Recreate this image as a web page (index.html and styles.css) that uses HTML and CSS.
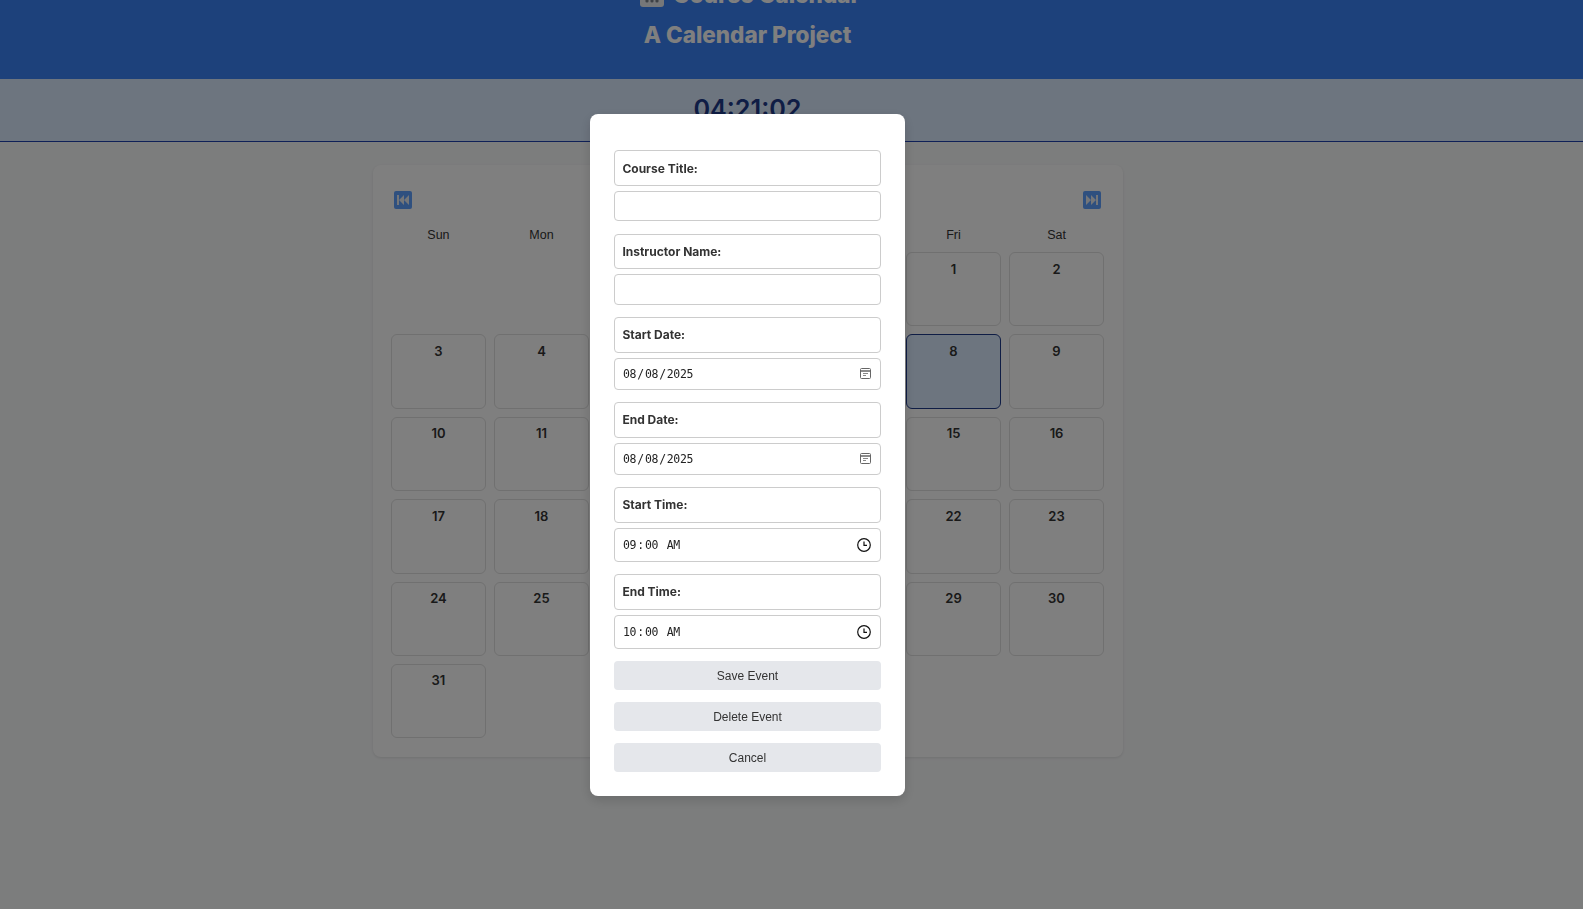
FILE: index.html
```html
<!DOCTYPE html>
<html lang="en">
<head>
  <meta charset="UTF-8">
  <meta name="viewport" content="width=device-width, initial-scale=1.0">
  <title>Course Calendar</title>
  <link rel="stylesheet" href="styles.css">
</head>
<body>
  <header class="site-header">
    <h1 class="site-title">
      <svg class="title-icon" width="24" height="24" viewBox="0 0 24 24">
        <rect width="24" height="24" rx="3" fill="#eceef2"/>
        <path d="M18 16h6v5a3 3 0 0 1-3 3h-3z" fill="#c9d6e6" transform="translate(0 -14)"/>
        <g fill="#7d828c">
          <circle cx="7" cy="12" r="1.6"/><circle cx="12" cy="12" r="1.6"/><circle cx="17" cy="12" r="1.6"/>
          <circle cx="7" cy="18" r="1.6"/><circle cx="12" cy="18" r="1.6"/><circle cx="17" cy="18" r="1.6"/>
        </g>
      </svg>
      Course Calendar
    </h1>
    <h2 class="site-subtitle">A Calendar Project</h2>
  </header>

  <div class="clock-bar"><span class="clock">04:21:02</span></div>

  <main class="content">
    <section class="calendar">
      <div class="calendar-nav">
        <button class="nav-btn" aria-label="Previous month">
          <svg width="18" height="18" viewBox="0 0 18 18"><rect width="18" height="18" rx="2" fill="#5ea0ff"/><path d="M3 4h2v10H3zM5 9l5-5v10zM10 9l5-5v10z" fill="#e8edf2"/></svg>
        </button>
        <span class="month-label">August 2025</span>
        <button class="nav-btn" aria-label="Next month">
          <svg width="18" height="18" viewBox="0 0 18 18"><rect width="18" height="18" rx="2" fill="#5ea0ff"/><path d="M13 4h2v10h-2zM13 9 8 4v10zM8 9 3 4v10z" fill="#e8edf2"/></svg>
        </button>
      </div>
      <div class="weekdays">
        <span>Sun</span><span>Mon</span><span>Tue</span><span>Wed</span><span>Thu</span><span>Fri</span><span>Sat</span>
      </div>
      <div class="days">
        <div class="day-empty"></div><div class="day-empty"></div><div class="day-empty"></div><div class="day-empty"></div><div class="day-empty"></div>
        <div class="day">1</div><div class="day">2</div>
        <div class="day">3</div><div class="day">4</div><div class="day">5</div><div class="day">6</div><div class="day">7</div><div class="day today">8</div><div class="day">9</div>
        <div class="day">10</div><div class="day">11</div><div class="day">12</div><div class="day">13</div><div class="day">14</div><div class="day">15</div><div class="day">16</div>
        <div class="day">17</div><div class="day">18</div><div class="day">19</div><div class="day">20</div><div class="day">21</div><div class="day">22</div><div class="day">23</div>
        <div class="day">24</div><div class="day">25</div><div class="day">26</div><div class="day">27</div><div class="day">28</div><div class="day">29</div><div class="day">30</div>
        <div class="day">31</div>
      </div>
    </section>
  </main>

  <div class="overlay">
    <form class="modal">
      <label class="field-label" for="title">Course Title:</label>
      <input class="field-input" type="text" id="title">
      <label class="field-label" for="instructor">Instructor Name:</label>
      <input class="field-input" type="text" id="instructor">
      <label class="field-label" for="start-date">Start Date:</label>
      <input class="field-input" type="date" id="start-date" value="2025-08-08">
      <label class="field-label" for="end-date">End Date:</label>
      <input class="field-input" type="date" id="end-date" value="2025-08-08">
      <label class="field-label" for="start-time">Start Time:</label>
      <input class="field-input" type="time" id="start-time" value="09:00">
      <label class="field-label" for="end-time">End Time:</label>
      <input class="field-input" type="time" id="end-time" value="10:00">
      <button class="modal-btn" type="button">Save Event</button>
      <button class="modal-btn" type="button">Delete Event</button>
      <button class="modal-btn" type="button">Cancel</button>
    </form>
  </div>
</body>
</html>
```

FILE: styles.css
```css
* {
  box-sizing: border-box;
}
body {
  margin: 0;
  font-family: Inter, sans-serif;
  background-color: #f9fafb;
  color: #333;
  height: 909px;
  overflow: hidden;
}
.site-header {
  height: 79px;
  padding: 0 88px 26px 0;
  overflow: hidden;
  display: flex;
  flex-direction: column;
  justify-content: flex-end;
  align-items: center;
  background-color: #3b82f6;
  color: white;
}
.site-title,
.site-subtitle {
  margin: 0;
  flex-shrink: 0;
  font-size: 22.5px;
  line-height: 36px;
  font-weight: 800;
}
.site-title {
  display: flex;
  align-items: center;
  gap: 9px;
  margin-bottom: 4px;
  padding-left: 5px;
}
.title-icon {
  flex-shrink: 0;
}
.clock-bar {
  height: 63px;
  padding: 0 88px 2px 0;
  display: flex;
  align-items: center;
  justify-content: center;
  background-color: #dbeafe;
  border-bottom: 1px solid #1e40af;
}
.clock {
  font-size: 25.2px;
  font-weight: 600;
  color: #1e3a8a;
}
.content {
  padding: 23px 88px 0 0;
}
.calendar {
  width: 750px;
  margin: 0 auto;
  padding: 24px 18.8px 19px;
  background-color: white;
  border-radius: 8px;
  box-shadow: 0 1px 3px rgba(0, 0, 0, 0.1);
}
.calendar-nav {
  display: flex;
  justify-content: space-between;
  align-items: center;
  padding: 0 3px;
  margin-bottom: 15px;
}
.nav-btn {
  width: 18px;
  height: 18px;
  padding: 0;
  border: none;
  background: none;
  display: block;
}
.nav-btn svg {
  display: block;
}
.month-label {
  font-size: 18px;
  font-weight: 600;
}
.weekdays,
.days {
  display: grid;
  grid-template-columns: repeat(7, 1fr);
  gap: 8px 8.7px;
}
.weekdays {
  margin-bottom: 7px;
  font-family: "Liberation Sans", sans-serif;
  font-size: 12.5px;
  line-height: 20px;
  text-align: center;
}
.day,
.day-empty {
  height: 74.4px;
}
.day {
  padding-top: 5.5px;
  border: 1px solid #e0e0e0;
  border-radius: 6px;
  text-align: center;
  font-size: 13px;
  line-height: 20px;
  font-weight: 600;
}
.today {
  background-color: #dbeafe;
  border-color: #1e3a8a;
}
.overlay {
  position: fixed;
  inset: 0;
  padding: 1px 88px 0 0;
  display: flex;
  align-items: center;
  justify-content: center;
  background-color: rgba(0, 0, 0, 0.5);
}
.modal {
  width: 315px;
  padding: 36px 24px 24px;
  display: flex;
  flex-direction: column;
  background-color: white;
  border-radius: 8px;
  box-shadow: 0 4px 12px rgba(0, 0, 0, 0.15);
}
.field-label {
  height: 35.8px;
  padding: 7.4px 7.4px 0;
  margin-bottom: 5px;
  border: 1px solid #ccc;
  border-radius: 4px;
  font-size: 12px;
  line-height: 20px;
  font-weight: 700;
  color: #333;
}
.field-input {
  height: 30.4px;
  margin-bottom: 12.2px;
  padding: 0 7px;
  border: 1px solid #ccc;
  border-radius: 4px;
  font-size: 11.5px;
  letter-spacing: -0.3px;
  font-family: "DejaVu Sans Mono", monospace;
  color: #222;
  background-color: white;
}
.field-input[type="date"] {
  height: 32px;
}
.field-input[type="time"] {
  height: 34px;
}
.field-input::-webkit-calendar-picker-indicator {
  padding: 0;
  margin: 0 2px 0 0;
  background-repeat: no-repeat;
  background-position: center;
}
.field-input[type="date"]::-webkit-calendar-picker-indicator {
  width: 11px;
  height: 11px;
  background-image: url("data:image/svg+xml,%3Csvg xmlns='http://www.w3.org/2000/svg' width='11' height='11' viewBox='0 0 11 11'%3E%3Crect x='.5' y='.5' width='10' height='10' rx='1' fill='none' stroke='%23666'/%3E%3Cpath d='M1 3h9' stroke='%23666' stroke-width='1.4'/%3E%3Cpath d='M3 5.5h5M3 7.5h3' stroke='%23888' stroke-width='1.2'/%3E%3C/svg%3E");
}
.field-input[type="time"]::-webkit-calendar-picker-indicator {
  width: 14px;
  height: 14px;
  background-image: url("data:image/svg+xml,%3Csvg xmlns='http://www.w3.org/2000/svg' width='14' height='14' viewBox='0 0 14 14'%3E%3Ccircle cx='7' cy='7' r='6.3' fill='none' stroke='%23111' stroke-width='1.2'/%3E%3Cpath d='M7 3.5V7.3H10' fill='none' stroke='%23111' stroke-width='1.2'/%3E%3C/svg%3E");
}
.modal-btn {
  height: 29px;
  margin-bottom: 12px;
  padding: 1px 0 0;
  border: none;
  border-radius: 4px;
  background-color: #e5e7eb;
  color: #333;
  font-family: "Liberation Sans", sans-serif;
  font-size: 12px;
}
.modal-btn:last-child {
  margin-bottom: 0;
}
```
